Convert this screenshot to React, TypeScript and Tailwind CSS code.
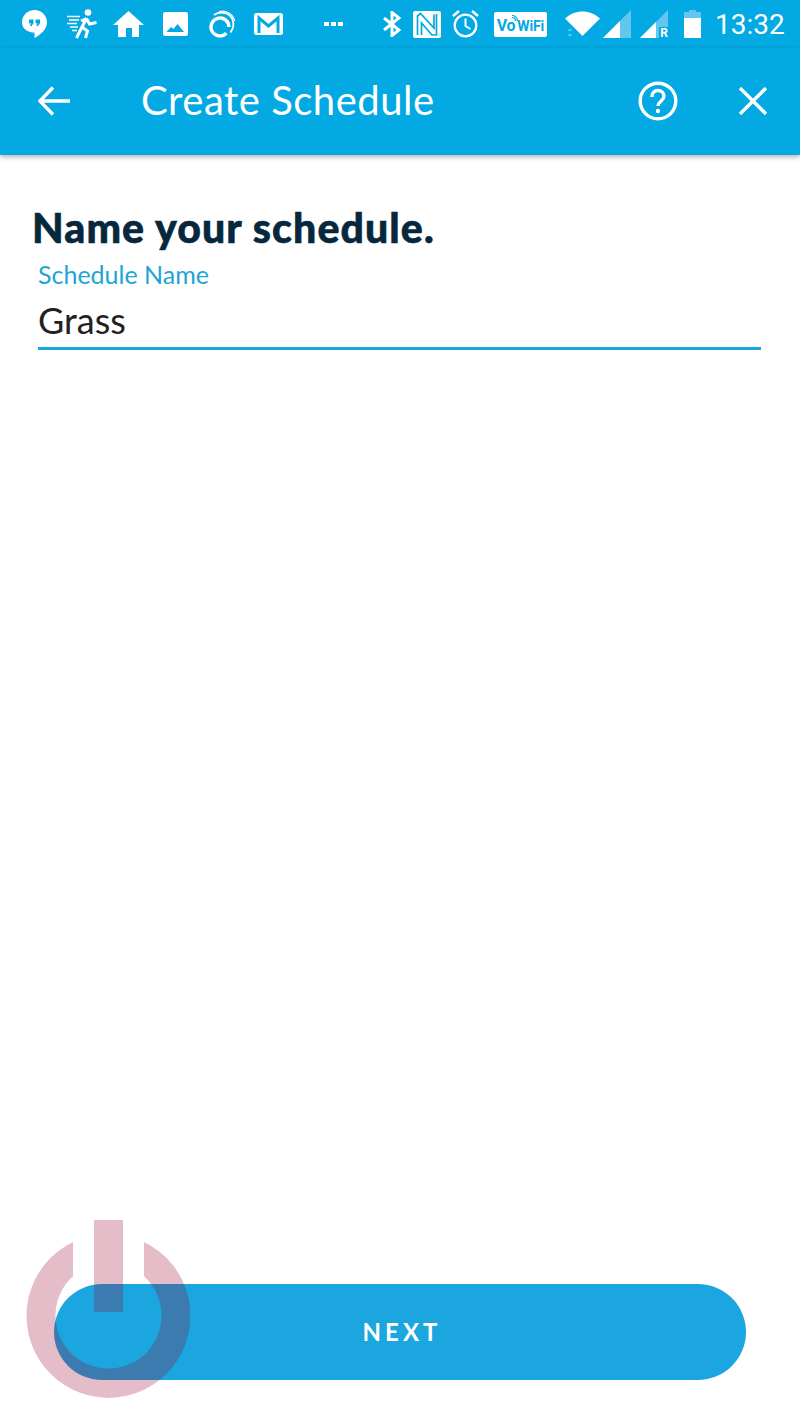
function StatusBar() {
  return (
    <div className="flex h-[48px] items-center bg-[#03a9e2] pl-[22px] text-white">
      {/* hangouts */}
      <svg width="25" height="28" viewBox="0 0 25 28">
        <path d="M12.500 0C5.600 0 0 5.500 0 12.200 0 18.800 5.600 22.500 12.500 22.500V28c6.500-3.400 12.500-9 12.500-15.800C25 5.500 19.400 0 12.500 0z" fill="white" />
        <path d="M7 9.500h4.500v3.800L9.500 16H7.800l1-2.700H7zM13.500 9.500H18v3.800L16 16h-1.700l1-2.700h-1.800z" fill="#03a9e2" />
      </svg>
      {/* runner */}
      <svg width="31" height="30" viewBox="0 0 31 30" className="ml-[20px]" fill="none" stroke="white">
        <circle cx="21" cy="3.500" r="3.300" fill="white" stroke="none" />
        <path d="M19.500 9.500L15 18l5.500 4-2 7M19.500 9.500l3 5.500 7-1.500M19.500 9.500L14 12M15 18l-5.500 11" strokeWidth="3" />
        <path d="M0 7.500h13M2 11h10M0 14.500h10M3 18h8M5 21.500h5" strokeWidth="1.500" />
      </svg>
      {/* home */}
      <svg width="31" height="26" viewBox="0 0 31 26" className="ml-[15px]">
        <path d="M15.500 0L31 14h-5v12h-7v-9h-6v9H5V14H0z" fill="white" />
      </svg>
      {/* image */}
      <svg width="25" height="24" viewBox="0 0 25 24" className="ml-[19px]">
        <rect width="25" height="24" rx="2" fill="white" />
        <path d="M3.500 20l4.500-5 2.500 2 4-5 6.500 8z" fill="#03a9e2" />
      </svg>
      {/* circle app */}
      <svg width="29" height="29" viewBox="0 0 29 29" className="ml-[19px]" fill="none" stroke="white">
        <path d="M19.400 23.300A9 9 0 1 1 22 17" strokeWidth="3.400" />
        <path d="M7 5C14 0 24 3 26 11c1 4 0 8-2.500 11.500" strokeWidth="1.800" />
        <path d="M12 1.500C19 0 26 4 27.800 11" strokeWidth="1.200" />
      </svg>
      {/* gmail */}
      <svg width="29" height="22" viewBox="0 0 29 22" className="ml-[18px]">
        <rect width="29" height="22" rx="2.500" fill="white" />
        <path d="M5 20V5l9.500 8L24 5v15" fill="none" stroke="#03a9e2" strokeWidth="3" />
      </svg>
      {/* overflow dots */}
      <div className="ml-[41px] flex gap-[2px]">
        <span className="h-[4px] w-[5px] bg-white" />
        <span className="h-[4px] w-[5px] bg-white" />
        <span className="h-[4px] w-[5px] bg-white" />
      </div>
      {/* bluetooth */}
      <svg width="18" height="26" viewBox="0 0 18 26" className="ml-[40px]" fill="none" stroke="white" strokeWidth="3">
        <path d="M1 7l15 12-7 5.500V1.500L16 7 1 19" />
      </svg>
      {/* nfc */}
      <svg width="28" height="27" viewBox="0 0 28 27" className="ml-[12px]">
        <rect width="28" height="27" rx="2" fill="white" />
        <path d="M4.500 24V5l3-2.500L21 17V3.500M8.500 24V12L19 24h4.500V3" fill="none" stroke="#03a9e2" strokeWidth="1.700" />
      </svg>
      {/* alarm */}
      <svg width="27" height="28" viewBox="0 0 27 28" className="ml-[11px]" fill="none" stroke="white">
        <circle cx="13.500" cy="15.500" r="10.800" strokeWidth="2.300" />
        <path d="M13.500 8.500v7.500l5 3" strokeWidth="2" />
        <path d="M1 6l6-5M26 6l-6-5" strokeWidth="2.600" />
      </svg>
      {/* vowifi badge */}
      <div className="relative ml-[15px] flex h-[25px] w-[53px] items-center justify-center gap-[2px] rounded-[2px] bg-white pt-[3px] font-['Roboto',sans-serif] leading-none font-bold text-[#03a9e2]">
        <span className="text-[16px] tracking-[-0.3px]">Vo</span>
        <span className="text-[14px] tracking-[-0.1px]">WiFi</span>
        <svg width="7" height="7" viewBox="0 0 7 7" className="absolute top-[3px] left-[17px]" fill="none" stroke="#03a9e2" strokeWidth="1.200">
          <path d="M1 2.500c2 0 3.500 1.500 3.500 3.500M1 .5c3 0 5.500 2.500 5.500 5.500" />
        </svg>
      </div>
      {/* wifi */}
      <div className="relative ml-[18px] h-[26px] w-[35px]">
        <svg width="35" height="25" viewBox="0 0 35 25">
          <path d="M0 7.500C10-2 25-2 35 7.500L17.500 25z" fill="white" />
        </svg>
        <svg width="8" height="9" viewBox="0 0 8 9" className="absolute top-[17px] left-[1px]">
          <path d="M4 0l2.500 3h-5zM4 9L1.500 6h5z" fill="#62c6ee" />
        </svg>
      </div>
      {/* signal sim 1 */}
      <svg width="28" height="28" viewBox="0 0 28 28" className="ml-[3px]">
        <path d="M28 0v28H0z" fill="#62c6ee" />
        <path d="M17 11v17H0z" fill="white" />
      </svg>
      {/* signal sim 2 */}
      <div className="relative ml-[9px] h-[28px] w-[28px]">
        <svg width="28" height="28" viewBox="0 0 28 28">
          <path d="M28 0v17h-9v11H0z" fill="#62c6ee" />
          <path d="M16 12v16H0z" fill="white" />
        </svg>
        <span className="absolute right-0 bottom-[-1px] font-['Roboto',sans-serif] text-[12px] leading-[12px] font-bold text-white">R</span>
      </div>
      {/* battery */}
      <svg width="17" height="28" viewBox="0 0 17 28" className="ml-[16px]">
        <path d="M5 0h7v2h5v6H0V2h5z" fill="#62c6ee" />
        <path d="M0 8h17v20H0z" fill="white" />
      </svg>
      <span className="mt-[1px] ml-[14px] font-['Roboto',sans-serif] text-[28px] leading-none">13:32</span>
    </div>
  )
}

function Header() {
  return (
    <header className="relative z-10 flex h-[107px] items-center bg-[#03a9e2] pb-[2px] pl-[38px] text-white shadow-[0_2px_5px_rgba(0,0,0,0.3)]">
      <svg width="32" height="30" viewBox="0 0 32 30" fill="none" stroke="white" strokeWidth="3.400">
        <path d="M32 15H2M15 1.500L1.800 15 15 28.500" />
      </svg>
      <h1 className="mb-[2px] ml-[71px] font-['Lato',sans-serif] text-[40px] leading-none tracking-[0.5px]">Create Schedule</h1>
      <svg width="40" height="40" viewBox="0 0 40 40" className="ml-auto" fill="none" stroke="white">
        <circle cx="20" cy="20" r="17.800" strokeWidth="3.400" />
        <path d="M14 16c0-4 2.500-6.500 6-6.500s6 2.500 6 5.500c0 5-6 5.500-6 10" strokeWidth="3.400" />
        <circle cx="20" cy="30" r="2.200" fill="white" stroke="none" />
      </svg>
      <svg width="28" height="28" viewBox="0 0 28 28" className="mr-[33px] ml-[61px]" fill="none" stroke="white" strokeWidth="3.400">
        <path d="M1 1l26 26M27 1L1 27" />
      </svg>
    </header>
  )
}

export default function App() {
  return (
    <div className="relative flex h-[1422px] flex-col overflow-hidden bg-white font-['Lato',sans-serif]">
      <StatusBar />
      <Header />
      <main className="flex-1 px-[32px] pt-[50px]">
        <h2 className="text-[41px] leading-[46px] font-black tracking-[1.1px] text-[#06273d] [-webkit-text-stroke:0.6px_#06273d]">Name your schedule.</h2>
        <div className="mt-[9px] ml-[6px] w-[723px] border-b-[3px] border-[#1ba6df]">
          <div className="text-[25px] leading-[28px] text-[#1ea5d6]">Schedule Name</div>
          <div className="mt-[10px] pb-[5px] text-[36px] leading-[44px] text-[#222222]">Grass</div>
        </div>
      </main>
      <footer className="px-[54px] pb-[42px]">
        <button className="flex h-[96px] w-full items-center justify-center rounded-full bg-[#1ba6df] pl-[4px] text-[24px] font-bold tracking-[4px] text-white">
          NEXT
        </button>
      </footer>
      {/* power watermark over the page */}
      <svg width="164" height="178" viewBox="0 0 164 178" className="absolute top-[1220px] left-[26px]">
        <path
          d="M47 22A82 82 0 1 0 118 22V56.200A53 53 0 1 1 47 56.200ZM68 0H97V92H68Z"
          fill="#9b002b"
          fillOpacity="0.26"
        />
      </svg>
    </div>
  )
}
